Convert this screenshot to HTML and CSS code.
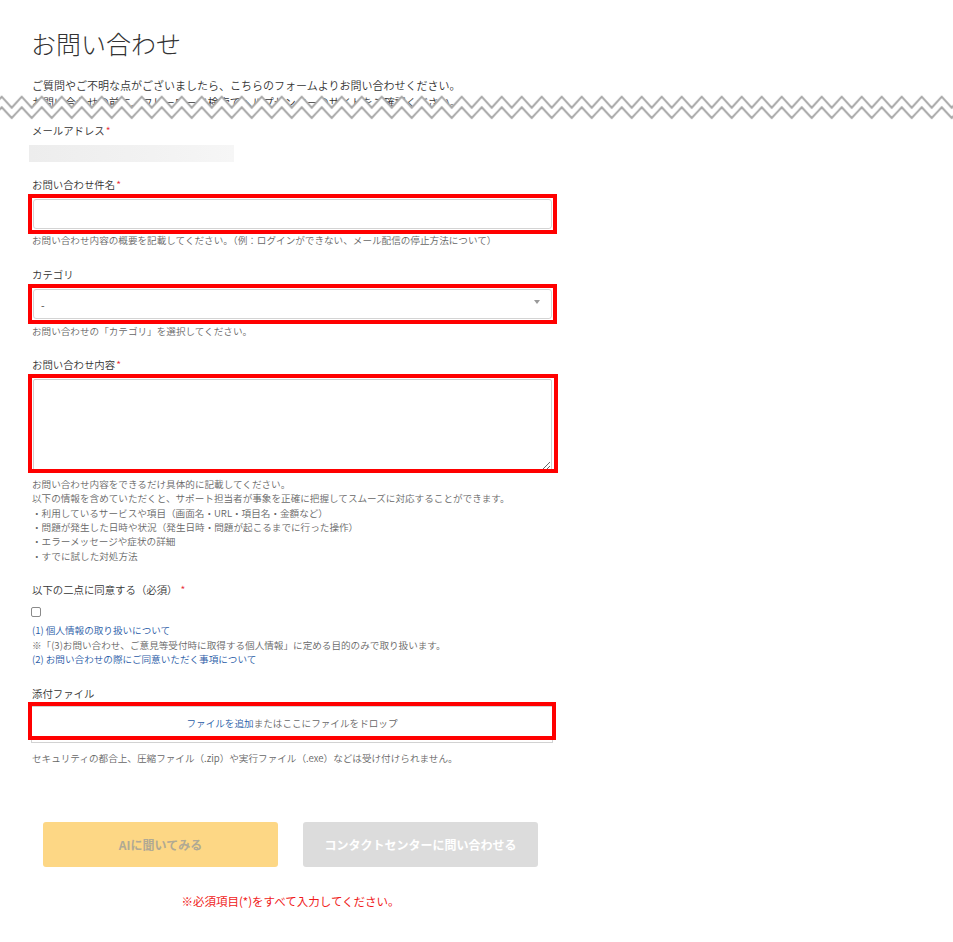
FILE: index.html
```html
<!DOCTYPE html>
<html lang="ja">
<head>
<meta charset="utf-8">
<title>お問い合わせ</title>
<link rel="stylesheet" href="styles.css">
</head>
<body>
<div class="page">
  <h1 class="title">お問い合わせ</h1>
  <div class="intro">
    <p>ご質問やご不明な点がございましたら、こちらのフォームよりお問い合わせください。</p>
    <p>お問い合わせの前に、フリーワード検索でヘルプセンターのサイトをご確認ください。</p>
    <svg class="cut" width="953" height="29" viewBox="0 0 953 29">
      <defs>
        <pattern id="zz" x="-3.3" y="0" width="20" height="29" patternUnits="userSpaceOnUse">
          <path d="M-5,15.7 L5,4.7 L15,15.7 L25,4.7 L25,29 L-5,29 Z" fill="#fff"/>
          <path d="M-5,15.7 L5,4.7 L15,15.7 L25,4.7" fill="none" stroke="#a8a8a8" stroke-width="2"/>
          <path d="M-5,26 L5,15.3 L15,26 L25,15.3" fill="none" stroke="#a8a8a8" stroke-width="2"/>
        </pattern>
      </defs>
      <rect width="953" height="29" fill="url(#zz)"/>
    </svg>
  </div>

  <form class="form">
    <div class="field field-email">
      <div class="label">メールアドレス<span class="req">*</span></div>
      <div class="masked"></div>
    </div>

    <div class="field field-subject">
      <div class="label">お問い合わせ件名<span class="req">*</span></div>
      <div class="hl">
        <input class="text-input" type="text">
      </div>
      <div class="hint">お問い合わせ内容の概要を記載してください。（例：ログインができない、メール配信の停止方法について）</div>
    </div>

    <div class="field">
      <div class="label">カテゴリ</div>
      <div class="hl select-wrap">
        <div class="select">-</div>
        <svg class="caret" width="6" height="4" viewBox="0 0 6 4"><path d="M0,0 L6,0 L3,4 Z" fill="#9a9a9a"/></svg>
      </div>
      <div class="hint">お問い合わせの「カテゴリ」を選択してください。</div>
    </div>

    <div class="field">
      <div class="label">お問い合わせ内容<span class="req">*</span></div>
      <div class="hl hl-ta">
        <textarea class="textarea"></textarea>
      </div>
      <div class="hint hint-ta">
        お問い合わせ内容をできるだけ具体的に記載してください。<br>
        以下の情報を含めていただくと、サポート担当者が事象を正確に把握してスムーズに対応することができます。<br>
        ・利用しているサービスや項目（画面名・URL・項目名・金額など）<br>
        ・問題が発生した日時や状況（発生日時・問題が起こるまでに行った操作）<br>
        ・エラーメッセージや症状の詳細<br>
        ・すでに試した対処方法
      </div>
    </div>

    <div class="field">
      <div class="label">以下の二点に同意する（必須）<span class="req req-gap">*</span></div>
      <input class="check" type="checkbox">
      <div class="consent">
        <div class="link">(1) 個人情報の取り扱いについて</div>
        <div class="note-gray">※「(3)お問い合わせ、ご意見等受付時に取得する個人情報」に定める目的のみで取り扱います。</div>
        <div class="link">(2) お問い合わせの際にご同意いただく事項について</div>
      </div>
    </div>

    <div class="field">
      <div class="label">添付ファイル</div>
      <div class="drop">
        <span class="link-inline">ファイルを追加</span>またはここにファイルをドロップ
      </div>
      <div class="hint hint-file">セキュリティの都合上、圧縮ファイル（.zip）や実行ファイル（.exe）などは受け付けられません。</div>
    </div>

    <div class="actions">
      <button type="button" class="btn btn-ai">AIに聞いてみる</button>
      <button type="button" class="btn btn-cc">コンタクトセンターに問い合わせる</button>
    </div>
    <div class="error">※必須項目(*)をすべて入力してください。</div>
  </form>
</div>
</body>
</html>
```

FILE: styles.css
```css
html, body {
  margin: 0;
  padding: 0;
  background: #fff;
}
body {
  font-family: "Noto Sans CJK JP", "Noto Sans", sans-serif;
  font-weight: 350;
  color: #333;
}
.page {
  width: 953px;
  padding-bottom: 20px;
}
.title {
  margin: 28px 0 0 31px;
  font-size: 25px;
  line-height: 30px;
  font-weight: 300;
  color: #333;
}
.intro {
  position: relative;
  margin-top: 18.5px;
  padding-left: 32px;
  font-size: 11px;
  line-height: 17px;
  color: #333;
}
.intro p {
  margin: 0;
}
.cut {
  position: absolute;
  left: 0;
  top: 15.5px;
  display: block;
}
.form {
  margin-top: 12px;
  padding-left: 32px;
  width: 522px;
}
.field {
  margin-top: 19px;
}
.field-email {
  margin-top: 0;
}
.field-subject {
  margin-top: 14.5px;
}
.label {
  font-size: 10.4px;
  line-height: 15px;
  color: #333;
}
.req {
  color: #e8303a;
  margin-left: 1px;
}
.req-gap {
  margin-left: 3px;
}
.masked {
  margin: 7.5px 0 0 -3px;
  width: 205px;
  height: 17px;
  background: linear-gradient(to right, #ededed, #f2f2f2 60%, #f6f6f6);
}
.hl {
  position: relative;
  margin: 7px 0 0 1px;
  width: 519px;
}
.hl::after {
  content: "";
  position: absolute;
  left: -5px;
  right: -5px;
  top: -5px;
  bottom: -5px;
  border: 4px solid #ff0000;
  pointer-events: none;
}
.hl-ta::after {
  bottom: -2px;
  right: -6px;
}
.text-input {
  display: block;
  box-sizing: border-box;
  width: 519px;
  height: 30px;
  margin: 0;
  border: 1px solid #d4d4d4;
  border-radius: 3px;
  background: #fff;
  outline: none;
}
.select {
  box-sizing: border-box;
  width: 519px;
  height: 30px;
  padding-left: 7px;
  border: 1px solid #d4d4d4;
  border-radius: 3px;
  font-size: 10.4px;
  line-height: 29px;
  color: #333;
}
.caret {
  position: absolute;
  right: 12px;
  top: 11px;
}
.textarea {
  display: block;
  box-sizing: border-box;
  width: 519px;
  height: 92px;
  margin: 0;
  border: 1px solid #cfcfcf;
  border-radius: 2px;
  outline: none;
  font-family: inherit;
}
.hint {
  margin-top: 4.8px;
  font-size: 9.6px;
  line-height: 14.4px;
  color: #666;
}
.hint-ta {
  margin-top: 5.8px;
}
.check {
  display: block;
  appearance: none;
  -webkit-appearance: none;
  box-sizing: border-box;
  width: 10px;
  height: 10px;
  margin: 9.5px 0 0 -1px;
  border: 1px solid #8a8a8a;
  border-radius: 2px;
  background: #fff;
}
.consent {
  margin-top: 6.8px;
  font-size: 9.6px;
  line-height: 14.4px;
}
.link, .link-inline {
  color: #1f5aa6;
}
.note-gray {
  color: #666;
}
.drop {
  box-sizing: border-box;
  position: relative;
  margin: 5.5px 0 0 -1px;
  width: 522px;
  height: 37px;
  border: 1px solid #d2d2d2;
  text-align: center;
  font-size: 9.6px;
  line-height: 33px;
  color: #666;
}
.drop::after {
  content: "";
  position: absolute;
  left: -4px;
  right: -4px;
  top: -5px;
  bottom: 2px;
  border: 4px solid #ff0000;
  pointer-events: none;
}
.hint-file {
  margin-top: 8px;
}
.actions {
  display: flex;
  gap: 25px;
  margin: 56.8px 0 0 11px;
}
.btn {
  width: 235px;
  height: 45px;
  border: none;
  border-radius: 3px;
  font-family: inherit;
  font-size: 12px;
  font-weight: 700;
  padding: 0;
}
.btn-ai {
  background: #fdd785;
  color: #b0a994;
}
.btn-cc {
  background: #dcdcdc;
  color: #fff;
}
.error {
  margin: 26px 0 0 11px;
  width: 495px;
  text-align: center;
  font-size: 11.5px;
  line-height: 17px;
  font-weight: 400;
  color: #f01a1a;
}
```
